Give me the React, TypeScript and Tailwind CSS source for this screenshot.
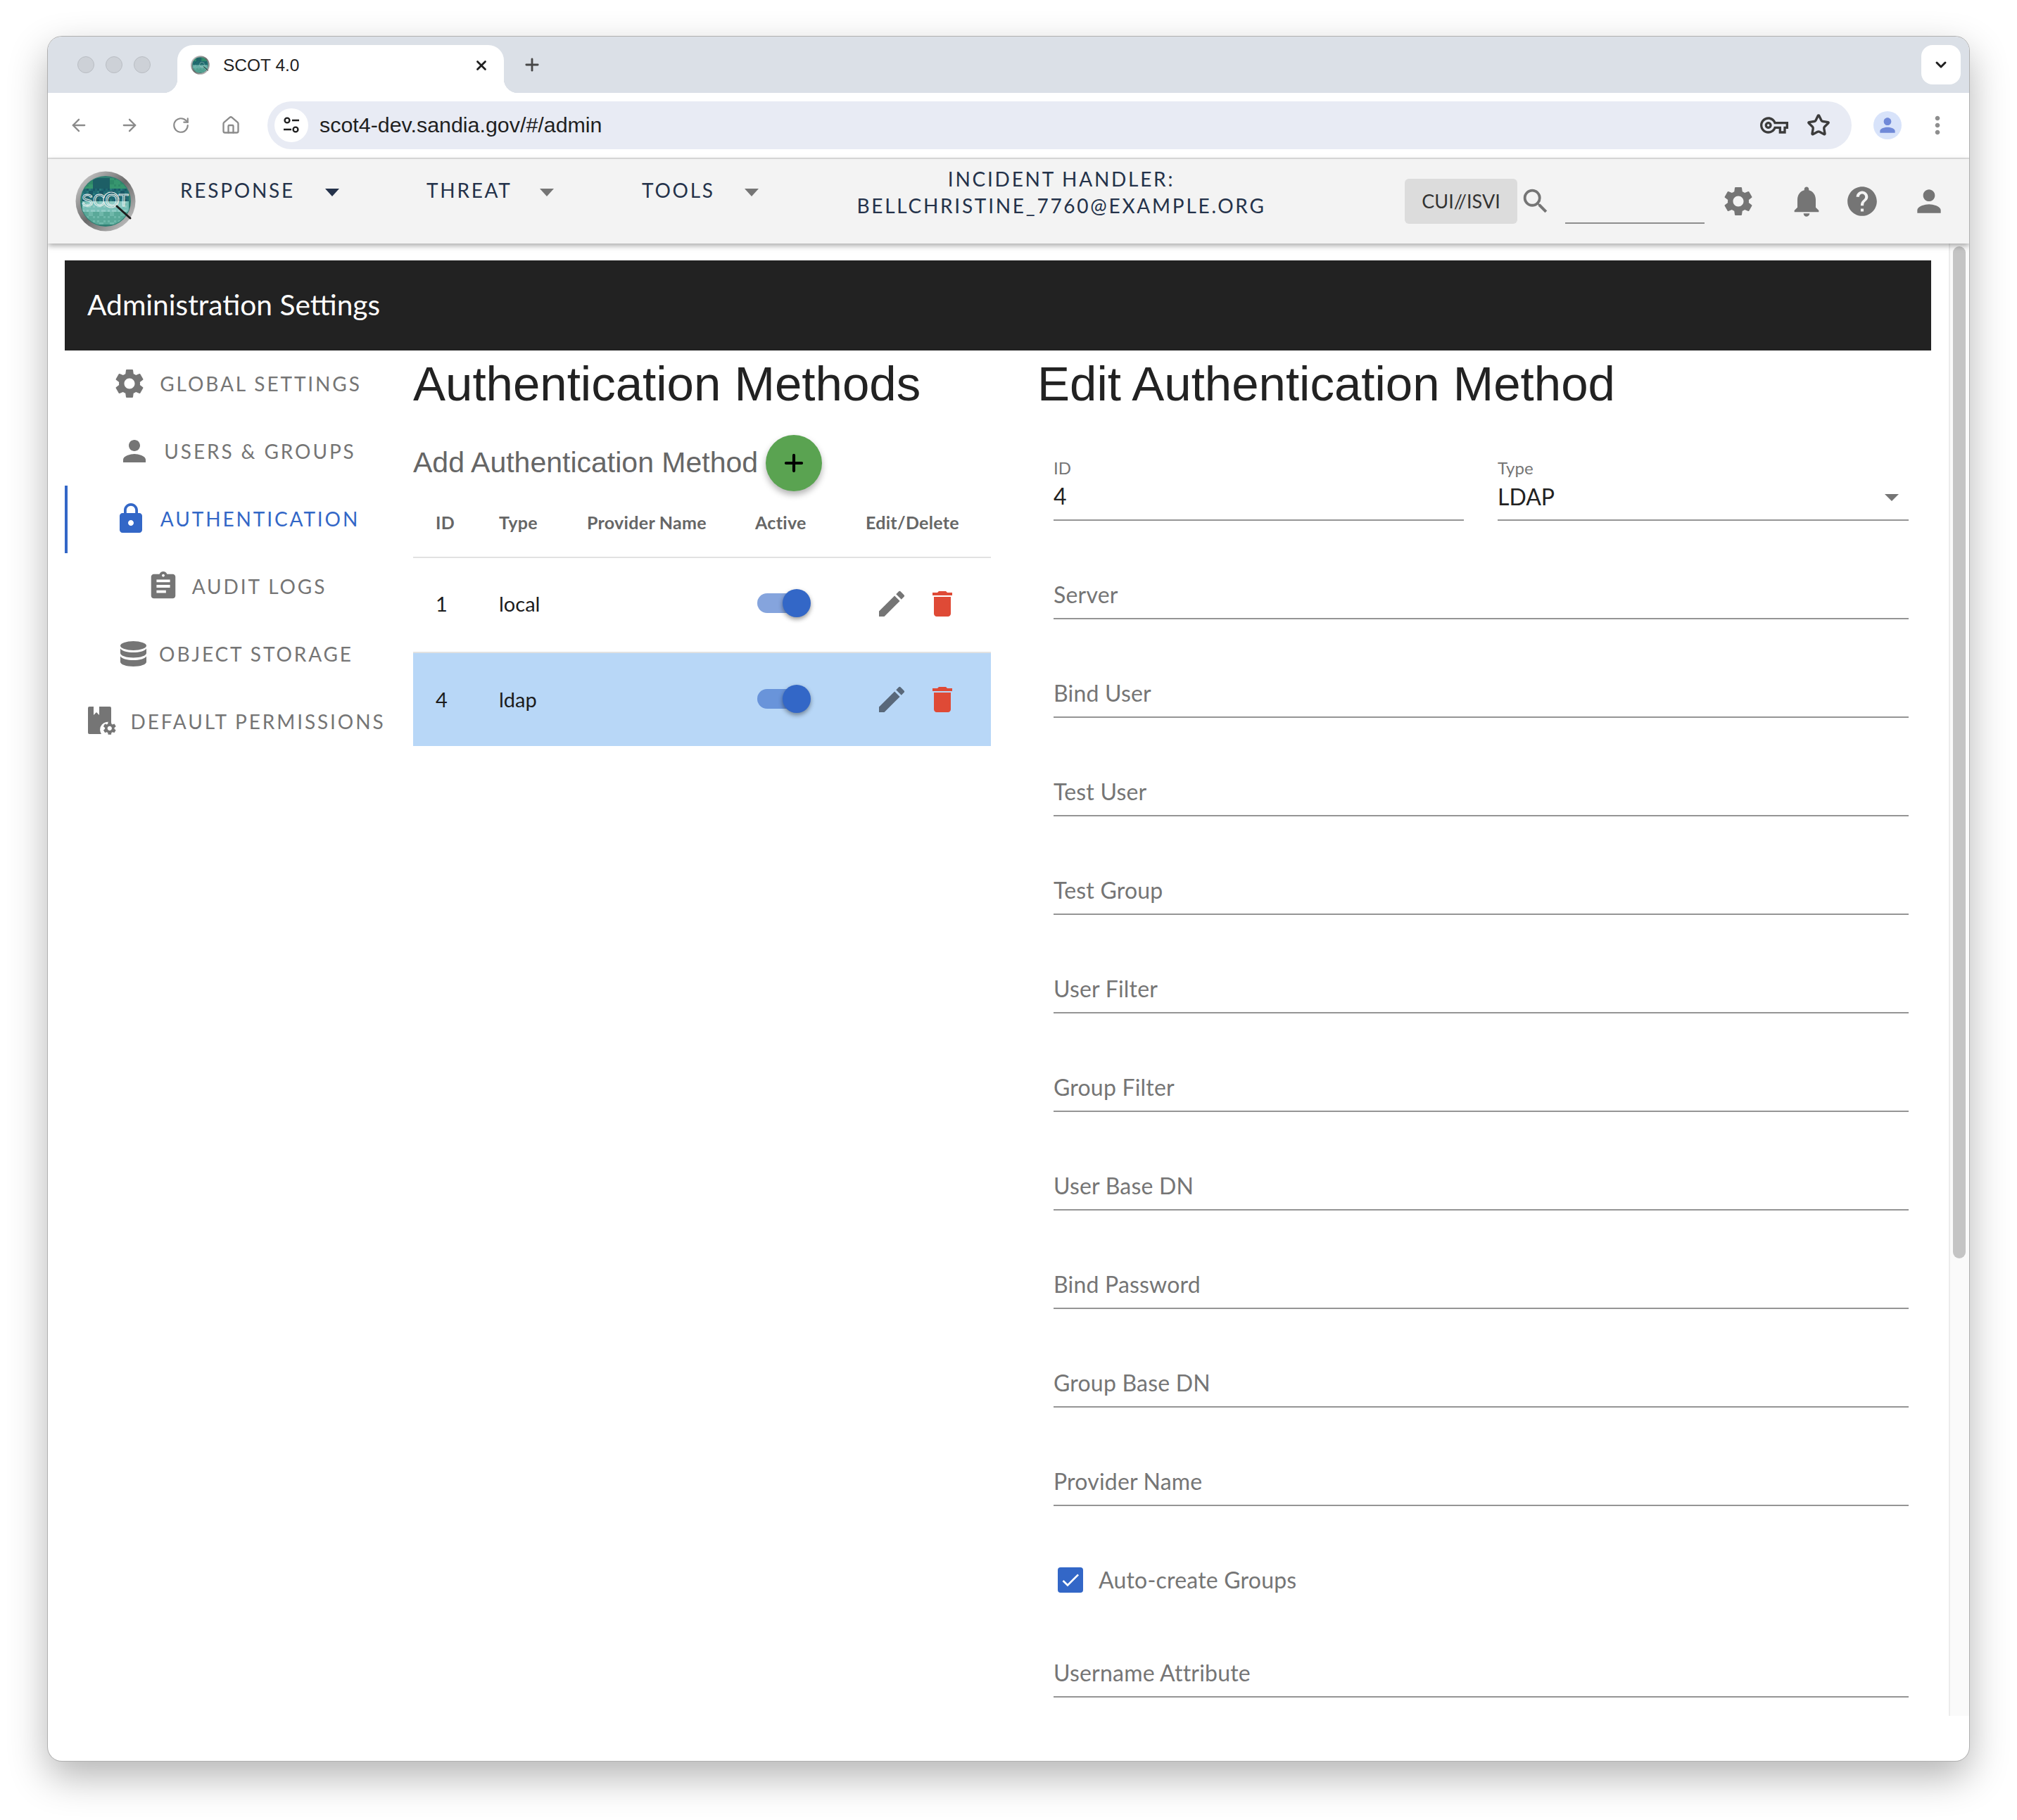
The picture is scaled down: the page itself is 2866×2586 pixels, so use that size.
import React from "react";
import { ArrowLeft, ArrowRight, RotateCw, House, X, Plus, ChevronDown, Star } from "lucide-react";
import { MdSettings, MdPerson, MdLock, MdAssignment, MdNotifications, MdHelp, MdSearch, MdEdit, MdDelete, MdOutlineVpnKey, MdMoreVert, MdArrowDropDown, MdCheck } from "react-icons/md";

function Logo({ size, id }: { size: number; id: string }) {
  const cells: React.ReactElement[] = [];
  for (let r = 0; r < 22; r++) {
    for (let c = 0; c < 22; c++) {
      const v = (r * 7 + c * 13 + r * c * 3) % 5;
      const fill =
        r < 5
          ? c > 4 && c < 13
            ? "#1d5f66"
            : v < 2
              ? "#2f8a68"
              : "#37966f"
          : r < 11
            ? v < 2
              ? "#195866"
              : v < 4
                ? "#1f6a72"
                : "#287a7c"
            : r < 16
              ? v < 3
                ? "#8fcbc4"
                : "#78bfb7"
              : v < 2
                ? "#6fb8aa"
                : "#5aa999";
      cells.push(<rect key={`${r}-${c}`} x={10 + c * 3} y={10 + r * 3} width={3} height={3} fill={fill} />);
    }
  }
  return (
    <svg width={size} height={size} viewBox="0 0 86 86" className="shrink-0">
      <defs>
        <linearGradient id={`${id}r`} x1="0" y1="0" x2="1" y2="1">
          <stop offset="0" stopColor="#dcdcdc" />
          <stop offset="0.5" stopColor="#6a6a6a" />
          <stop offset="1" stopColor="#d4d4d4" />
        </linearGradient>
        <clipPath id={`${id}c`}>
          <circle cx="43" cy="43" r="35" />
        </clipPath>
      </defs>
      <circle cx="43" cy="43" r="42.5" fill={`url(#${id}r)`} />
      <circle cx="43" cy="43" r="36" fill="#2f7f73" />
      <g clipPath={`url(#${id}c)`}>{cells}</g>
      {size > 40 && (
        <text x="42.500" y="50" textAnchor="middle" fontFamily="Liberation Sans, sans-serif" fontSize="24" fill="none" stroke="#eef4f4" strokeWidth="0.9" textLength="67">
          SCOT
        </text>
      )}
      <circle cx="51" cy="41" r="11" fill="none" stroke="#dfe6e6" strokeWidth="1.2" />
      <path d="M59 50 L78 67" stroke="#1c1c1c" strokeWidth="3" strokeLinecap="round" />
    </svg>
  );
}

function DefaultPermIcon() {
  return (
    <svg width="42" height="44" viewBox="0 0 42 44" className="shrink-0">
      <path d="M2 1h6v12l4-4 4 4V1h15a2 2 0 0 1 2 2v21a11 11 0 0 0-14 16H2a2 2 0 0 1-2-2V3a2 2 0 0 1 2-2z" fill="#757575" />
      <g transform="translate(20 21) scale(0.9)">
        <path
          fill="#757575"
          d="M19.43 12.98c.04-.32.07-.64.07-.98s-.03-.66-.07-.98l2.11-1.65c.19-.15.24-.42.12-.64l-2-3.46c-.12-.22-.39-.3-.61-.22l-2.49 1c-.52-.4-1.08-.73-1.69-.98l-.38-2.65C14.46 2.18 14.25 2 14 2h-4c-.25 0-.46.18-.49.42l-.38 2.65c-.61.25-1.17.59-1.69.98l-2.49-1c-.23-.09-.49 0-.61.22l-2 3.46c-.13.22-.07.49.12.64l2.11 1.65c-.04.32-.07.65-.07.98s.03.66.07.98l-2.11 1.65c-.19.15-.24.42-.12.64l2 3.46c.12.22.39.3.61.22l2.49-1c.52.4 1.08.73 1.69.98l.38 2.65c.03.24.24.42.49.42h4c.25 0 .46-.18.49-.42l.38-2.65c.61-.25 1.17-.59 1.69-.98l2.49 1c.23.09.49 0 .61-.22l2-3.46c.12-.22.07-.49-.12-.64l-2.11-1.65zM12 15.5c-1.93 0-3.5-1.57-3.5-3.5s1.57-3.5 3.5-3.5 3.5 1.57 3.5 3.5-1.57 3.5-3.5 3.5z"
        />
      </g>
    </svg>
  );
}

function DatabaseIcon() {
  return (
    <svg width="37" height="36" viewBox="0 0 37 36" className="shrink-0" fill="#757575">
      <ellipse cx="18.5" cy="6.5" rx="18.5" ry="6.5" />
      <path d="M0 10.5c3 4 10 5.5 18.5 5.5S34 14.500 37 10.500V17c0 3.600-8.300 6.500-18.500 6.500S0 20.600 0 17z" />
      <path d="M0 21.500c3 4 10 5.500 18.500 5.500S34 25.500 37 21.500V29.500c0 3.600-8.300 6.500-18.500 6.500S0 33.100 0 29.500z" />
    </svg>
  );
}

function Caret({ className }: { className: string }) {
  return <span className={`mt-[6px] h-0 w-0 border-x-[10px] border-t-[11px] border-x-transparent ${className}`} />;
}

function TopBar() {
  return (
    <div className="flex h-[80px] shrink-0 items-start bg-[#dbe0e7]">
      <div className="flex h-[80px] w-[184px] shrink-0 items-center gap-[16px] pl-[42px]">
        <span className="h-[24px] w-[24px] rounded-full border border-[#b9bdc3] bg-[#cdd1d7]" />
        <span className="h-[24px] w-[24px] rounded-full border border-[#b9bdc3] bg-[#cdd1d7]" />
        <span className="h-[24px] w-[24px] rounded-full border border-[#b9bdc3] bg-[#cdd1d7]" />
      </div>
      <div className="relative mt-[12px] flex h-[68px] w-[464px] shrink-0 items-start rounded-t-[22px] bg-white pl-[19px] pt-[15px]">
        <span className="absolute bottom-0 left-[-20px] h-[20px] w-[20px] bg-[radial-gradient(circle_at_0_0,transparent_20px,white_20.5px)]" />
        <span className="absolute bottom-0 right-[-20px] h-[20px] w-[20px] bg-[radial-gradient(circle_at_100%_0,transparent_20px,white_20.5px)]" />
        <Logo size={27} id="fav" />
        <span className="ml-[19px] text-[24.5px] leading-[27px] text-[#1f1f1f] [font-family:'Liberation_Sans',sans-serif]">SCOT 4.0</span>
        <span className="ml-[248px] flex h-[27px] items-center">
          <X size={22} strokeWidth={3} className="text-[#1f1f1f]" />
        </span>
      </div>
      <div className="ml-[26px] flex h-[80px] items-center">
        <Plus size={28} strokeWidth={2.4} className="text-[#474747]" />
      </div>
      <div className="flex-1" />
      <div className="mr-[12px] mt-[12px] flex h-[56px] w-[56px] items-center justify-center rounded-[16px] bg-white">
        <ChevronDown size={24} strokeWidth={3} className="text-[#1f1f1f]" />
      </div>
    </div>
  );
}

function Toolbar() {
  return (
    <div className="flex h-[94px] shrink-0 items-center rounded-t-[20px] border-b-2 border-[#e2e2e2] bg-white pl-[30px]">
      <div className="flex w-[282px] shrink-0 items-center text-[#8b8b8b]">
        <ArrowLeft size={28} strokeWidth={2} />
        <ArrowRight size={28} strokeWidth={2} className="ml-[44px]" />
        <RotateCw size={26} strokeWidth={2} className="ml-[46px]" />
        <House size={28} strokeWidth={2} className="ml-[44px]" />
      </div>
      <div className="flex h-[68px] w-[2251px] shrink-0 items-center rounded-full bg-[#e8ebf4] pl-[10px] pr-[30px]">
        <span className="flex h-[48px] w-[48px] items-center justify-center rounded-full bg-white">
          <svg width="26" height="26" viewBox="0 0 26 26" fill="none" stroke="#1f1f1f" strokeWidth="2.4">
            <circle cx="7" cy="6" r="3.4" />
            <path d="M14 6h10M2 19h11" />
            <circle cx="19" cy="19" r="3.4" />
          </svg>
        </span>
        <span className="ml-[16px] text-[30.4px] text-[#1f1f1f] [font-family:'Liberation_Sans',sans-serif]">scot4-dev.sandia.gov/#/admin</span>
        <span className="flex-1" />
        <MdOutlineVpnKey size={40} className="text-[#3c3c3c]" />
        <Star size={34} strokeWidth={2.4} className="ml-[26px] text-[#3c3c3c]" />
      </div>
      <span className="ml-[31px] flex h-[40px] w-[40px] shrink-0 items-center justify-center rounded-full bg-[#d8e3fa]">
        <MdPerson size={32} className="text-[#7089d8]" />
      </span>
      <MdMoreVert size={40} className="ml-[31px] shrink-0 text-[#8e8e8e]" />
    </div>
  );
}

function AppHeader() {
  const nav = "text-[28px] leading-[38px] tracking-[2.75px] text-[#24324a] [font-family:Lato,sans-serif]";
  return (
    <div className="relative z-10 flex h-[120px] shrink-0 items-center bg-[#f3f3f3] pl-[39px] shadow-[0_3px_8px_rgba(0,0,0,0.35)]">
      <Logo size={86} id="app" />
      <div className="mb-[32px] ml-[63px] flex items-center">
        <span className={`${nav} w-[206px]`}>RESPONSE</span>
        <Caret className="border-t-[#24324a]" />
      </div>
      <div className="mb-[32px] ml-[124px] flex items-center">
        <span className={`${nav} w-[161px]`}>THREAT</span>
        <Caret className="border-t-[#757575]" />
      </div>
      <div className="mb-[32px] ml-[125px] flex items-center">
        <span className={`${nav} w-[146px]`}>TOOLS</span>
        <Caret className="border-t-[#757575]" />
      </div>
      <div className={`${nav} mb-[26px] ml-[125px] w-[610px] text-center`}>
        <div>INCIDENT HANDLER:</div>
        <div>BELLCHRISTINE_7760@EXAMPLE.ORG</div>
      </div>
      <div className="ml-[183px] flex h-[64px] w-[160px] items-center justify-center rounded-[6px] bg-[#dcdcdc] text-[27px] text-[#333] [font-family:Lato,sans-serif]">CUI//ISVI</div>
      <MdSearch size={46} className="ml-[3px] text-[#757575]" />
      <div className="ml-[19px] mt-[62px] h-[2px] w-[198px] bg-[#8d8d8d]" />
      <MdSettings size={50} className="ml-[23px] text-[#757575]" />
      <MdNotifications size={52} className="ml-[46px] text-[#757575]" />
      <MdHelp size={50} className="ml-[28px] text-[#757575]" />
      <MdPerson size={50} className="ml-[45px] text-[#757575]" />
    </div>
  );
}

const sideItems: { label: string; icon: React.ReactNode; active?: boolean }[] = [
  { label: "GLOBAL SETTINGS", icon: <MdSettings size={50} /> },
  { label: "USERS & GROUPS", icon: <MdPerson size={48} /> },
  { label: "AUTHENTICATION", icon: <MdLock size={48} />, active: true },
  { label: "AUDIT LOGS", icon: <MdAssignment size={46} /> },
  { label: "OBJECT STORAGE", icon: <DatabaseIcon /> },
  { label: "DEFAULT PERMISSIONS", icon: <DefaultPermIcon /> },
];

function Sidebar() {
  return (
    <div className="w-[495px] shrink-0">
      {sideItems.map((it) => (
        <div
          key={it.label}
          className={`flex h-[96px] items-center justify-center gap-[18px] border-l-4 pb-[3px] pr-[10px] text-[28px] tracking-[2.9px] [font-family:Lato,sans-serif] ${it.active ? "border-[#3367c7] text-[#3367c7]" : "border-transparent text-[#757575]"}`}
        >
          <span className="flex items-center">{it.icon}</span>
          <span>{it.label}</span>
        </div>
      ))}
    </div>
  );
}

function Toggle() {
  return (
    <div className="mb-[3px] flex h-[40px] w-[76px] items-center">
      <span className="h-[28px] w-[50px] rounded-l-full bg-[#3367c7]/60" />
      <span className="-ml-[14px] h-[40px] w-[40px] rounded-full bg-[#3367c7] shadow-[0_3px_6px_rgba(0,0,0,0.4)]" />
    </div>
  );
}

const cols = "grid grid-cols-[122px_125px_239px_157px_178px]";

function Row({ id, type, selected }: { id: string; type: string; selected?: boolean }) {
  return (
    <div className={`${cols} items-center text-[29px] text-[#1c1c1c] [font-family:Lato,sans-serif] ${selected ? "h-[132px] bg-[#b8d7f7]" : "h-[135px] border-b-2 border-[#e2e2e2] pb-[3px]"}`}>
      <div className="pl-[32px]">{id}</div>
      <div>{type}</div>
      <div />
      <div className="pl-[3px]">
        <Toggle />
      </div>
      <div className="flex items-center pl-[13px]">
        <MdEdit size={48} className={selected ? "text-[#59687a]" : "text-[#757575]"} />
        <MdDelete size={48} className="ml-[24px] text-[#df4a36]" />
      </div>
    </div>
  );
}

function Methods() {
  return (
    <div className="w-[821px] shrink-0">
      <div className="flex h-[94px] items-center text-[69px] leading-none text-[#222] [font-family:'Liberation_Sans',sans-serif]">Authentication Methods</div>
      <div className="mt-[26px] flex h-[80px] items-center">
        <span className="text-[41px] text-[#666] [font-family:'Liberation_Sans',sans-serif]">Add Authentication Method</span>
        <span className="ml-[11px] flex h-[80px] w-[80px] items-center justify-center rounded-full bg-[#5aa351] shadow-[0_5px_10px_rgba(0,0,0,0.3)]">
          <Plus size={38} strokeWidth={2.6} className="text-black" />
        </span>
      </div>
      <div className={`${cols} mt-[1px] h-[94px] items-center border-b-2 border-[#e2e2e2] pb-[4px] text-[25px] font-bold tracking-[0.3px] text-[#666] [font-family:Lato,sans-serif]`}>
        <div className="pl-[32px]">ID</div>
        <div>Type</div>
        <div>Provider Name</div>
        <div>Active</div>
        <div>Edit/Delete</div>
      </div>
      <Row id="1" type="local" />
      <Row id="4" type="ldap" selected />
    </div>
  );
}

function Field({ label }: { label: string }) {
  return (
    <div className="flex h-[140px] items-end border-b-2 border-[#959595] pb-[13px] text-[32px] leading-[40px] tracking-[0.2px] text-[#757575] [font-family:Lato,sans-serif]">{label}</div>
  );
}

function EditForm() {
  const fields = ["Server", "Bind User", "Test User", "Test Group", "User Filter", "Group Filter", "User Base DN", "Bind Password", "Group Base DN", "Provider Name"];
  return (
    <div className="ml-[66px] w-[1238px] shrink-0">
      <div className="flex h-[94px] items-center text-[69px] leading-none text-[#222] [font-family:'Liberation_Sans',sans-serif]">Edit Authentication Method</div>
      <div className="pl-[23px]">
        <div className="mt-[56px] grid grid-cols-[583px_584px] gap-x-[48px] [font-family:Lato,sans-serif]">
          <div className="h-[92px] border-b-2 border-[#959595]">
            <div className="pt-[2px] text-[24px] leading-[30px] text-[#757575]">ID</div>
            <div className="mt-[5px] text-[32px] leading-[40px] text-[#222]">4</div>
          </div>
          <div className="h-[92px] border-b-2 border-[#959595]">
            <div className="pt-[2px] text-[24px] leading-[30px] text-[#757575]">Type</div>
            <div className="mt-[2px] flex items-center justify-between text-[32px] leading-[40px] text-[#222]">
              <span>LDAP</span>
              <MdArrowDropDown size={48} className="text-[#757575]" />
            </div>
          </div>
        </div>
        {fields.map((f) => (
          <Field key={f} label={f} />
        ))}
        <div className="mt-[85px] flex items-center gap-[22px] text-[32px] leading-[40px] tracking-[0.2px] text-[#757575] [font-family:Lato,sans-serif]">
          <span className="ml-[6px] flex h-[36px] w-[36px] items-center justify-center rounded-[4px] bg-[#3367c7]">
            <MdCheck size={32} className="text-white" />
          </span>
          <span>Auto-create Groups</span>
        </div>
        <div className="h-[147px] pt-[7px]">
          <Field label="Username Attribute" />
        </div>
      </div>
    </div>
  );
}

export default function App() {
  return (
    <div className="h-[2586px] w-[2866px] overflow-hidden bg-white pl-[68px] pt-[52px]">
      <div className="flex h-[2450px] w-[2730px] flex-col overflow-hidden rounded-[20px] bg-white shadow-[0_0_0_1px_#b0b0b0,0_22px_55px_rgba(0,0,0,0.3)]">
        <TopBar />
        <Toolbar />
        <AppHeader />
        <div className="flex h-[2092px] shrink-0 overflow-hidden">
          <div className="w-[2701px] shrink-0 pl-[24px] pt-[24px]">
            <div className="flex h-[128px] w-[2652px] items-center bg-[#222222] pb-[2px] pl-[32px] text-[40.7px] text-white [font-family:Lato,sans-serif]">Administration Settings</div>
            <div className="flex">
              <Sidebar />
              <Methods />
              <EditForm />
            </div>
          </div>
          <div className="w-[29px] border-l-2 border-[#ececec] bg-[#fafafa] pl-[4px] pt-[4px]">
            <div className="h-[1438px] w-[18px] rounded-full bg-[#c4c4c4]" />
          </div>
        </div>
      </div>
    </div>
  );
}
